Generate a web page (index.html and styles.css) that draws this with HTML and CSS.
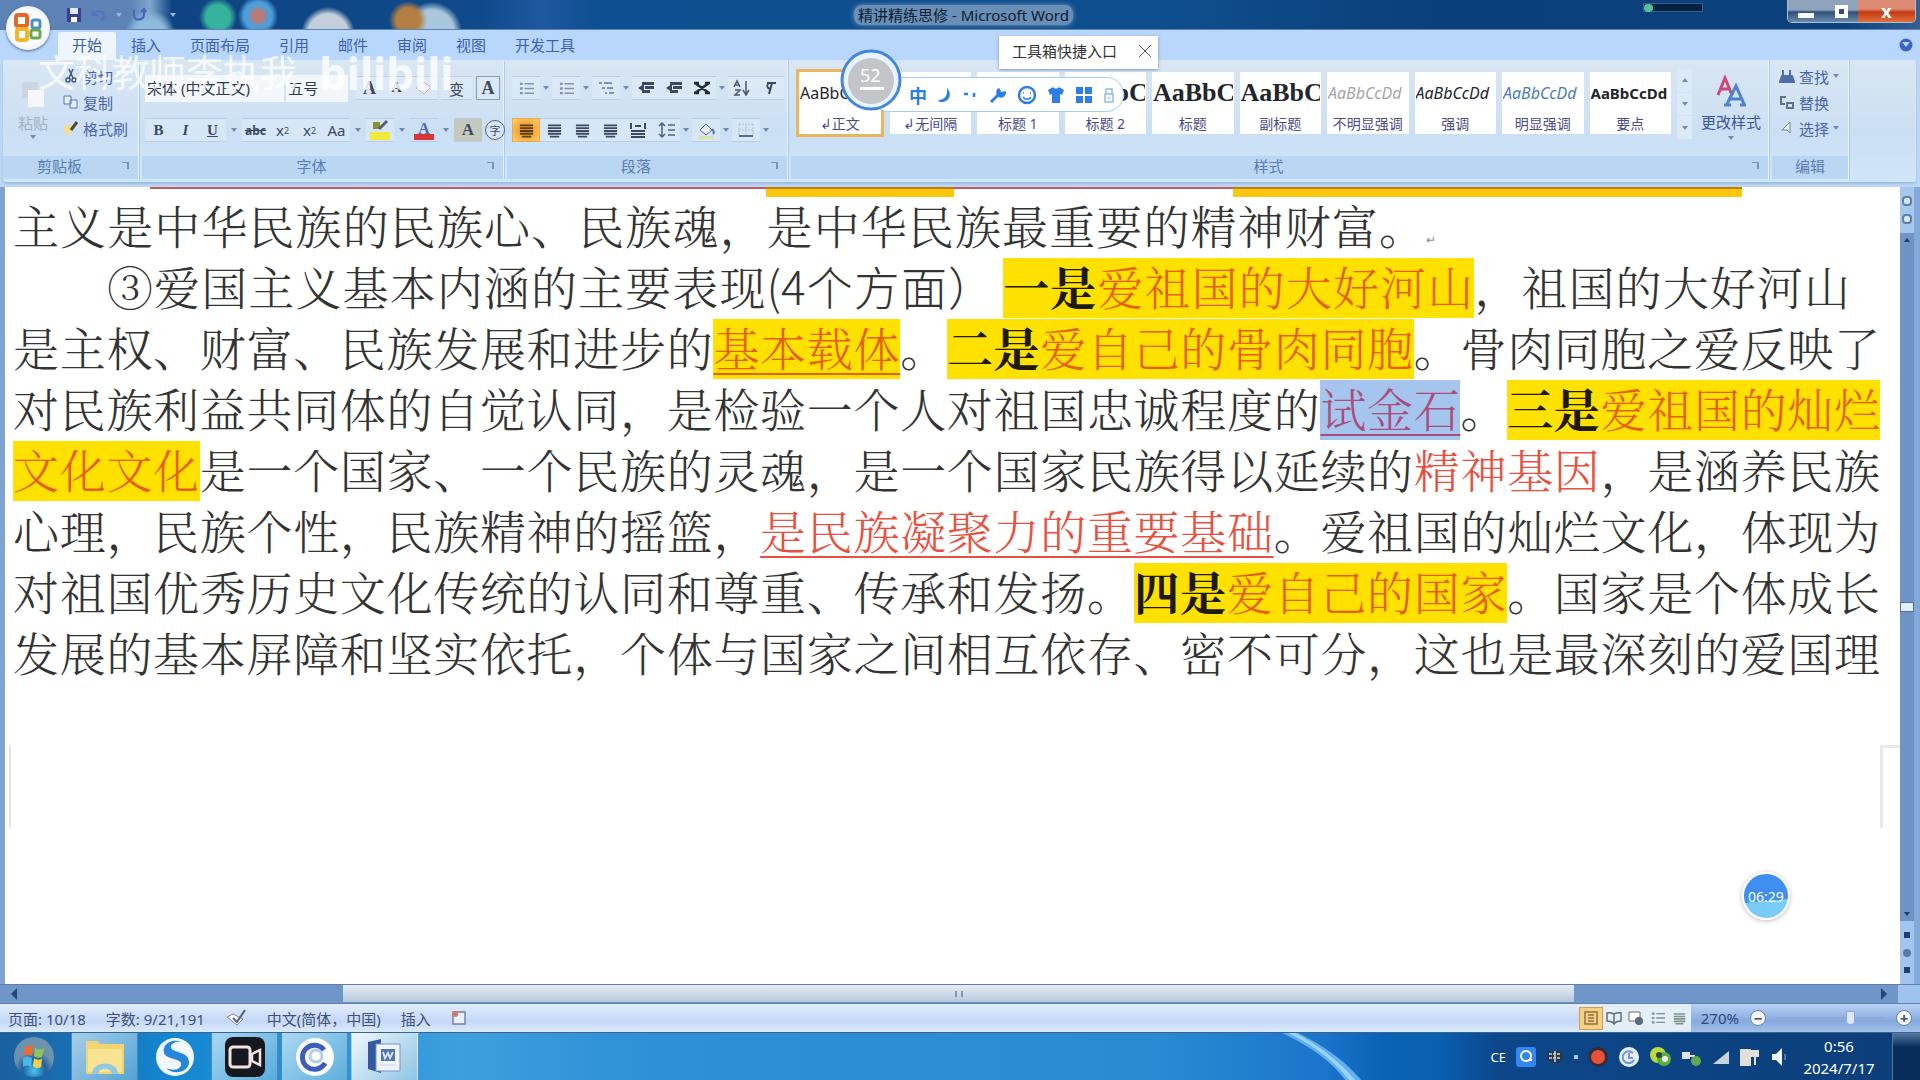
FILE: index.html
```html
<!DOCTYPE html>
<html lang="zh-CN">
<head>
<meta charset="utf-8">
<title>精讲精练思修 - Microsoft Word</title>
<link rel="stylesheet" href="styles.css">
</head>
<body>
<svg width="0" height="0" class="defs" aria-hidden="true">
  <symbol id="lines" viewBox="0 0 16 16"><path d="M1 2.5h14M1 5.5h14M1 8.500h14M1 11.500h14M3 14.500h10" stroke="currentColor" stroke-width="2"/></symbol>
  <symbol id="list" viewBox="0 0 16 16"><path d="M6 3h10M6 8h10M6 13h10" stroke="currentColor" stroke-width="1.500"/><path d="M1 3h3M1 8h3M1 13h3" stroke="currentColor" stroke-width="2.500"/></symbol>
  <symbol id="indent" viewBox="0 0 16 16"><path d="M4 2h12v3H4zM7 6h9v3H7zM4 10h8v3H4z" fill="currentColor"/><path d="M6 4v8L0 8z" fill="currentColor"/></symbol>
</svg>

<header class="titlebar">
  <div class="quick">
    <button aria-label="保存"><svg width="16" height="16" viewBox="0 0 16 16"><path d="M1 1h14v14H1z" fill="#3c3f93"/><path d="M4 1h8v6H4z" fill="#dfe6f5"/><path d="M5 10h6v5H5z" fill="#fff"/></svg></button>
    <button aria-label="撤消"><svg width="16" height="16" viewBox="0 0 16 16"><path d="M2 3v5h5M3 7c3-5 10-3 10 2 0 2-1 3-3 4" fill="none" stroke="#5273bd" stroke-width="2"/></svg></button>
    <span class="caret light"></span>
    <button aria-label="恢复"><svg width="16" height="16" viewBox="0 0 16 16"><path d="M3 3v5c0 6 9 6 10 0V3m-3 2 3-3 2 3" fill="none" stroke="#3f66bd" stroke-width="2"/></svg></button>
    <span class="caret light end-caret"></span>
  </div>
  <div class="doc-title"><span>精讲精练思修 - Microsoft Word</span></div>
  <div class="rec"><i></i></div>
  <div class="winbtns">
    <button class="min" aria-label="最小化"><i></i></button>
    <button class="max" aria-label="还原"><i></i></button>
    <button class="close" aria-label="关闭">x</button>
  </div>
</header>
<button class="orb" aria-label="Office 按钮"><svg width="30" height="32" viewBox="0 0 30 32"><rect x="3" y="3" width="11" height="11" rx="2" fill="none" stroke="#e4672b" stroke-width="4"/><rect x="4" y="17" width="10" height="11" rx="2" fill="none" stroke="#efb52b" stroke-width="4"/><rect x="19" y="8" width="8" height="8" rx="2" fill="none" stroke="#4b8fd0" stroke-width="3"/><rect x="18" y="18" width="9" height="8" rx="2" fill="none" stroke="#69a850" stroke-width="3"/></svg></button>

<nav class="tabs">
  <button class="tab on">开始</button><button class="tab">插入</button><button class="tab">页面布局</button><button class="tab">引用</button><button class="tab">邮件</button><button class="tab">审阅</button><button class="tab">视图</button><button class="tab">开发工具</button>
  <button class="help" aria-label="帮助"><svg width="14" height="14" viewBox="0 0 14 14"><circle cx="7" cy="7" r="6.500" fill="#3766c4"/><path d="M3 4h8l-4 5z" fill="#bcd3fa"/></svg></button>
</nav>

<section class="ribbon">
  <div class="group clip">
    <div class="body">
      <button class="paste"><svg width="26" height="32" viewBox="0 0 26 32"><path d="M2 4h16v16H2z" fill="#ccd6e2"/><path d="M8 12h16v17H8z" fill="#f4f8fd"/></svg><span>粘贴</span><i class="caret"></i></button>
      <div class="stack">
        <button><svg width="16" height="16" viewBox="0 0 16 16"><path d="M6 1l4 9M10 1 6 10" stroke="#495578" stroke-width="1.500"/><circle cx="5" cy="12" r="2" fill="none" stroke="#495578" stroke-width="1.500"/><circle cx="11" cy="12" r="2" fill="none" stroke="#495578" stroke-width="1.500"/></svg>剪切</button>
        <button><svg width="16" height="16" viewBox="0 0 16 16"><path d="M1 2h7v8H1zM7 6h7v8H7z" fill="#e9effb" stroke="#5c74b9"/></svg>复制</button>
        <button><svg width="16" height="16" viewBox="0 0 16 16"><path d="M1 5h8v8l-5 2-3-3z" fill="#f0dc92"/><path d="M8 10 14 2" stroke="#4f4738" stroke-width="3"/></svg>格式刷</button>
      </div>
    </div>
    <div class="label">剪贴板<i class="launch"></i></div>
  </div>

  <div class="group font">
    <div class="body rows">
      <div class="row">
        <select class="face" aria-label="字体"><option>宋体 (中文正文)</option></select>
        <select class="size" aria-label="字号"><option>五号</option></select>
        <button class="big">A</button><button class="sm">A</button>
        <button aria-label="清除格式"><svg width="20" height="18" viewBox="0 0 20 18"><path d="M2 9 9 3l8 5-7 7z" fill="#f5eef5" stroke="#b9b3c9"/></svg></button>
        <button class="tb">变</button><button class="tb boxed">A</button>
      </div>
      <div class="row">
        <button><b>B</b></button><button><em>I</em></button><button><u>U</u></button><i class="caret"></i>
        <button><s>abc</s></button><button>x<sub>2</sub></button><button>x<sup>2</sup></button><button>Aa</button><i class="caret"></i>
        <button class="wide" aria-label="突出显示"><svg width="20" height="22" viewBox="0 0 20 22"><path d="M0 13h20v8H0z" fill="#f0e83c"/><path d="M3 3h7v7H3z" fill="#8a9139"/><path d="m9 10 8-8" stroke="#56606e" stroke-width="3"/></svg></button><i class="caret"></i>
        <button class="wide colorA">A</button><i class="caret"></i>
        <button class="wide shade">A</button><button class="ring">字</button>
      </div>
    </div>
    <div class="label">字体<i class="launch"></i></div>
  </div>

  <div class="group para">
    <div class="body rows">
      <div class="row">
        <button aria-label="项目符号" class="dim"><svg width="15" height="15"><use href="#list"/></svg></button><i class="caret"></i>
        <button aria-label="编号" class="dim"><svg width="15" height="15"><use href="#list"/></svg></button><i class="caret"></i>
        <button aria-label="多级列表" class="dim"><svg width="16" height="16" viewBox="0 0 16 16"><path d="M1 3h3M6 3h8M4 8h3M9 8h6M7 13h2M11 13h5" stroke="currentColor" stroke-width="2"/></svg></button><i class="caret"></i>
        <button aria-label="减少缩进"><svg width="16" height="16"><use href="#indent"/></svg></button>
        <button aria-label="增加缩进"><svg width="16" height="16"><use href="#indent"/></svg></button>
        <button aria-label="中文版式"><svg width="18" height="16" viewBox="0 0 18 16"><path d="m2 3 14 10M16 3 2 13M1 3h5M12 3h5M1 13h5M12 13h5" stroke="#222b3a" stroke-width="2.500"/></svg></button><i class="caret"></i>
        <button aria-label="排序"><svg width="18" height="18" viewBox="0 0 18 18"><path d="m1 8 3-6 3 6M2 6h4M2 11h5l-5 5h5M13 2v13m-3-4 3 5 3-5" fill="none" stroke="#4c5a72" stroke-width="1.500"/></svg></button>
        <button aria-label="显示标记"><svg width="16" height="16" viewBox="0 0 16 16"><path d="M5 3h9M10 3 7 14M7 3c-3 2-2 5 1 6" fill="none" stroke="#3a4660" stroke-width="2"/></svg></button>
      </div>
      <div class="row">
        <button class="active" aria-label="左对齐"><svg width="15" height="15"><use href="#lines"/></svg></button>
        <button aria-label="居中"><svg width="15" height="15"><use href="#lines"/></svg></button>
        <button aria-label="右对齐"><svg width="15" height="15"><use href="#lines"/></svg></button>
        <button aria-label="两端对齐"><svg width="15" height="15"><use href="#lines"/></svg></button>
        <button aria-label="分散对齐"><svg width="16" height="16" viewBox="0 0 16 16"><path d="M1 1v6M15 1v6M5 4h6M1 9h14M1 12h14M1 15h14" stroke="currentColor" stroke-width="2"/></svg></button>
        <button aria-label="行距"><svg width="17" height="16" viewBox="0 0 17 16"><path d="M4 1v14M1 4l3-3 3 3M1 12l3 3 3-3M10 3h7M10 8h7M10 13h7" fill="none" stroke="#52637e" stroke-width="1.500"/></svg></button><i class="caret"></i>
        <button aria-label="底纹"><svg width="18" height="18" viewBox="0 0 18 18"><path d="m3 9 6-6 6 6-6 5z" fill="#e8eef5" stroke="#5b6b84"/><path d="M1 15h15v3H1z" fill="#d9e5a4"/><path d="M15 8c2 2 2 4 1 5" stroke="#4a72bc" stroke-width="2" fill="none"/></svg></button><i class="caret"></i>
        <button aria-label="边框"><svg width="16" height="16" viewBox="0 0 16 16"><path d="M1 2h14M1 8h14M1 2v12M8 2v12M15 2v12" stroke="#b2bfd2" stroke-dasharray="2 1"/><path d="M1 14h14" stroke="#5d6d86" stroke-width="2"/></svg></button><i class="caret"></i>
      </div>
    </div>
    <div class="label">段落<i class="launch"></i></div>
  </div>

  <div class="group styles">
    <div class="body gallery">
      <button class="tile sel"><span class="n">AaBbCc</span><small>↲正文</small></button>
      <button class="tile"><span class="n">AaBbCc</span><small>↲无间隔</small></button>
      <button class="tile"><span class="h">AaBbC</span><small>标题 1</small></button>
      <button class="tile"><span class="h">AaBbC</span><small>标题 2</small></button>
      <button class="tile"><span class="h">AaBbC</span><small>标题</small></button>
      <button class="tile"><span class="h">AaBbC</span><small>副标题</small></button>
      <button class="tile"><span class="i grey">AaBbCcDd</span><small>不明显强调</small></button>
      <button class="tile"><span class="i">AaBbCcDd</span><small>强调</small></button>
      <button class="tile"><span class="i blue">AaBbCcDd</span><small>明显强调</small></button>
      <button class="tile"><span class="k">AaBbCcDd</span><small>要点</small></button>
      <div class="spin"><button aria-label="上"><i class="caret up"></i></button><button aria-label="下"><i class="caret"></i></button><button aria-label="更多"><i class="caret"></i></button></div>
      <button class="change"><svg width="32" height="32" viewBox="0 0 32 32"><path d="m3 20 7-17 7 17M6 14h8" fill="none" stroke="#cb4979" stroke-width="3"/><path d="m12 29 9-18 8 18M15 24h11M9 30h7M25 30h6" fill="none" stroke="#4d82cd" stroke-width="3"/></svg><span>更改样式</span><i class="caret"></i></button>
    </div>
    <div class="label">样式<i class="launch"></i></div>
  </div>

  <div class="group edit">
    <div class="body">
      <div class="stack">
        <button><svg width="16" height="16" viewBox="0 0 16 16"><path d="M4 2v5M11 2v5M3 8h4v6H1zM9 8h4l2 6H9z" fill="#506ca7" stroke="#506ca7" stroke-width="2"/></svg>查找<i class="caret"></i></button>
        <button><svg width="16" height="16" viewBox="0 0 16 16"><path d="M7 3H2v7h4M8 9h6v5H8z" fill="none" stroke="#5f7488" stroke-width="2"/></svg>替换</button>
        <button><svg width="16" height="16" viewBox="0 0 16 16"><path d="M11 2v11l-3-3H3z" fill="#f3f8ff" stroke="#6b80a7"/></svg>选择<i class="caret"></i></button>
      </div>
    </div>
    <div class="label">编辑</div>
  </div>
</section>

<div class="watermark"><span>文科教师李执我</span><b>bilibili</b></div>

<div class="tip"><span>工具箱快捷入口</span><button aria-label="关闭提示"><svg width="14" height="14" viewBox="0 0 14 14"><path d="m1 1 12 12M13 1 1 13" stroke="#555"/></svg></button></div>
<div class="ime">
  <div class="face-icon"><svg width="62" height="62" viewBox="0 0 62 62"><circle cx="31" cy="31" r="29" fill="#e9f3fd" stroke="#4287dc" stroke-width="3"/><circle cx="31" cy="32" r="23" fill="#c3c5c8"/><path d="M20 38h24v3H20z" fill="#fff"/></svg><span>52</span></div>
  <b>中</b>
  <svg width="16" height="18" viewBox="0 0 16 18"><path d="M10 2c6 6 2 15-7 14-2-1-2-2-1-2 6 0 9-5 8-12z" fill="#2c7de6"/></svg>
  <svg width="16" height="18" viewBox="0 0 16 18"><path d="M1 8h4M11 7v4" stroke="#2c7de6" stroke-width="2.500"/></svg>
  <svg width="18" height="18" viewBox="0 0 18 18"><path d="M2 16 9 9" stroke="#2c7de6" stroke-width="3"/><path d="M8 3c4-3 3 3 5 3s4-2 4 1c-1 5-6 6-9 3-1-2-1-5 0-7z" fill="#2c7de6"/></svg>
  <svg width="20" height="20" viewBox="0 0 20 20"><circle cx="10" cy="10" r="8" fill="none" stroke="#2c7de6" stroke-width="2.500"/><path d="M6 8h1M13 8h1M6 12c2 3 6 3 8 0" stroke="#2c7de6" stroke-width="1.500" fill="none"/></svg>
  <svg width="18" height="18" viewBox="0 0 18 18"><path d="m1 4 5-3c1 2 5 2 6 0l5 3-2 5-2-1v9H5V8L3 9z" fill="#2c7de6"/></svg>
  <svg width="18" height="18" viewBox="0 0 18 18"><path d="M1 1h7v7H1zM10 1h7v7h-7zM1 10h7v7H1zM10 10h7v7h-7z" fill="#2c7de6"/></svg>
  <svg width="12" height="18" viewBox="0 0 12 18"><path d="M3 8V3h6v5M2 8h8v8H2zM6 11v2" fill="none" stroke="#8dbaf0" stroke-width="1.500"/></svg>
</div>

<div class="work">
  <main class="page">
    <div class="prev"><i class="hl a"></i><i class="hl c"></i></div>
    <article>
      <p class="first">主义是中华民族的民族心、民族魂，是中华民族最重要的精神财富。<small>↵</small></p>
      <p class="second">③爱国主义基本内涵的主要表现<span class="sans">(4个方面）</span><mark><b>一是</b>爱祖国的大好河山</mark>，祖国的大好河山</p>
      <p>是主权、财富、民族发展和进步的<mark class="ul">基本载体</mark>。<mark><b>二是</b>爱自己的骨肉同胞</mark>。骨肉同胞之爱反映了</p>
      <p>对民族利益共同体的自觉认同，是检验一个人对祖国忠诚程度的<mark class="selected">试金石</mark>。<mark><b>三是</b>爱祖国的灿烂</mark></p>
      <p><mark>文化文化</mark>是一个国家、一个民族的灵魂，是一个国家民族得以延续的<span class="red">精神基因</span>，是涵养民族</p>
      <p>心理，民族个性，民族精神的摇篮，<span class="red ul">是民族凝聚力的重要基础</span>。爱祖国的灿烂文化，体现为</p>
      <p>对祖国优秀历史文化传统的认同和尊重、传承和发扬。<mark><b>四是</b>爱自己的国家</mark>。国家是个体成长</p>
      <p>发展的基本屏障和坚实依托，个体与国家之间相互依存、密不可分，这也是最深刻的爱国理</p>
    </article>
    <div class="corners"><i></i><i></i></div>
    <div class="timer">06:29</div>
  </main>
  <aside class="vscroll">
    <div class="vtop"><i></i><i></i></div>
    <div class="track"><i class="caret up"></i><span class="thumb"></span><i class="caret"></i></div>
    <div class="jump"><i></i><i class="o"></i><i></i></div>
  </aside>
</div>
<div class="hscroll"><i class="arr l"></i><div class="rail"><div class="hthumb"><i></i></div></div><i class="arr r"></i><span class="end"></span></div>

<footer class="status">
  <span>页面: 10/18</span><span>字数: 9/21,191</span>
  <svg width="22" height="18" viewBox="0 0 22 18"><path d="m2 8 6-3 10 5-6 6z" fill="#fff" stroke="#7886a6"/><path d="m8 9 4 4 8-12" fill="none" stroke="#52617f" stroke-width="2"/></svg>
  <span>中文(简体，中国)</span><span>插入</span>
  <svg width="16" height="16" viewBox="0 0 16 16"><path d="M2 2h12v12H2z" fill="#e9effa" stroke="#7780a0" stroke-width="1.500"/><circle cx="4" cy="4" r="3" fill="#d07a68"/></svg>
  <div class="views">
    <button class="on" aria-label="页面视图"><svg width="16" height="16" viewBox="0 0 16 16"><path d="M2 2h12v12H2zM5 5h6M5 8h6M5 11h6" fill="none" stroke="#95703b" stroke-width="1.500"/></svg></button>
    <button aria-label="阅读版式"><svg width="16" height="16" viewBox="0 0 16 16"><path d="M1 3c3-1 5 0 7 1 2-1 4-2 7-1v8c-3 0-5 0-7 3-2-3-4-3-7-3zM8 4v9" fill="none" stroke="#626c7d" stroke-width="1.500"/></svg></button>
    <button aria-label="Web 版式"><svg width="16" height="16" viewBox="0 0 16 16"><path d="M1 2h11v9H1z" fill="#fff" stroke="#626c7d"/><circle cx="11" cy="11" r="4" fill="#586b79"/></svg></button>
    <button aria-label="大纲"><svg width="14" height="14"><use href="#list"/></svg></button>
    <button aria-label="普通"><svg width="13" height="13"><use href="#lines"/></svg></button>
  </div>
  <div class="scale">
    <span class="pct">270%</span>
    <button class="zoom">−</button><div class="slide"><i></i></div><button class="zoom">+</button>
  </div>
</footer>

<footer class="taskbar">
  <button class="start" aria-label="开始菜单"><svg width="44" height="44" viewBox="0 0 44 44"><defs><radialGradient id="orbg" cy=".85"><stop offset="0" stop-color="#4bc5ef"/><stop offset=".6" stop-color="#1f5f9e"/><stop offset="1" stop-color="#6d92ac"/></radialGradient></defs><circle cx="22" cy="22" r="20" fill="url(#orbg)"/><path d="M13 12c3-2 6-2 8 0l-1 9c-3-2-6-2-9 0z" fill="#e96b35"/><path d="M23 13c3 2 6 2 9 0l-2 9c-3 1-6 1-8-1z" fill="#8fc655"/><path d="M11 23c3-2 6-2 9 0l-1 9c-3-2-5-2-8 0z" fill="#4bb6ec"/><path d="M22 23c2 2 5 2 8 1l-1 8c-3 2-6 1-8-1z" fill="#f5d148"/></svg></button>
  <button class="app lit" aria-label="资源管理器"><svg width="42" height="40" viewBox="0 0 42 40"><path d="M2 4h12l2 3h24v30H2z" fill="#f0d472"/><path d="M4 12h34v23H4z" fill="#f8e392"/><path d="M8 37c0-14 26-14 26 0h-6c-1-7-13-7-14 0z" fill="#8fc8df"/></svg></button>
  <button class="app" aria-label="搜狗"><svg width="40" height="40" viewBox="0 0 40 40"><circle cx="20" cy="20" r="19" fill="#f2f7fd"/><path d="M27 5C15 1 7 8 9 16c2 7 19 5 17 12-1 5-8 6-15 3 8 8 23 4 23-6 0-11-18-9-18-15 0-4 5-6 11-5z" fill="#2487db"/></svg></button>
  <button class="app lit" aria-label="录屏"><svg width="40" height="40" viewBox="0 0 40 40"><rect width="40" height="40" rx="8" fill="#15191f"/><rect x="5" y="10" width="20" height="20" rx="3" fill="none" stroke="#f1e3e1" stroke-width="3"/><path d="m27 17 8-4v15l-8-4z" fill="none" stroke="#f1e3e1" stroke-width="2.500"/></svg></button>
  <button class="app lit" aria-label="课堂"><svg width="40" height="40" viewBox="0 0 40 40"><circle cx="20" cy="20" r="19" fill="#fafcff"/><path d="M29 13a12 12 0 1 0 1 13" fill="none" stroke="#3c5dbd" stroke-width="5"/><circle cx="21" cy="19" r="6" fill="none" stroke="#b5ccf1" stroke-width="3"/></svg></button>
  <button class="app word" aria-label="Word"><svg width="40" height="38" viewBox="0 0 40 38"><path d="M3 4 16 1v34L3 31z" fill="#35599f"/><path d="M11 6h24v27H11z" fill="#eef3fa" stroke="#7b94c3"/><path d="M16 11h14v12H16z" fill="#5274ae"/><path d="m18 14 2 6 3-5 2 5 3-6M15 27h16" fill="none" stroke="#d9e3f3" stroke-width="2"/></svg></button>
  <div class="glare"><svg width="100" height="47" viewBox="0 0 100 47"><path d="M0-2h16c26 12 52 30 68 50H68C54 28 30 12 0-2z" fill="#5fb0f2"/><path d="M6-2h8c26 14 48 30 64 50h-6C56 28 36 12 6-2z" fill="#9dd2fb"/></svg></div>
  <div class="tray">
    <span class="ce">CE</span>
    <svg width="20" height="20" viewBox="0 0 20 20"><rect width="20" height="20" rx="3" fill="#3487ef"/><circle cx="10" cy="9" r="5" fill="none" stroke="#fff" stroke-width="2"/><path d="M12 13h4" stroke="#fff" stroke-width="2"/></svg>
    <svg width="18" height="16" viewBox="0 0 18 16"><rect x="1" y="2" width="16" height="12" rx="5" fill="#283850"/><path d="M3 5h12M3 9h12M9 2v11" stroke="#d5d8da" stroke-width="1.500" stroke-dasharray="3 1"/></svg>
    <i class="dot"></i>
    <svg width="20" height="20" viewBox="0 0 20 20"><circle cx="10" cy="10" r="10" fill="#342c3c"/><circle cx="10" cy="10" r="7" fill="#e85338"/></svg>
    <svg width="22" height="22" viewBox="0 0 22 22"><circle cx="11" cy="11" r="10" fill="#e8f0ff"/><path d="M15 7a6 6 0 1 0 1 7M11 7v5h4" fill="none" stroke="#7292df" stroke-width="2"/></svg>
    <svg width="22" height="20" viewBox="0 0 22 20"><circle cx="8" cy="8" r="8" fill="#bfd83d"/><circle cx="14" cy="12" r="7" fill="#5dab47"/><circle cx="9" cy="8" r="3" fill="#244a39"/><circle cx="15" cy="12" r="3" fill="#f0f7e8"/></svg>
    <svg width="20" height="20" viewBox="0 0 20 20"><path d="M0 6h7v5H0zM8 9h5" fill="#dfe3e7" stroke="#dfe3e7" stroke-width="2"/><circle cx="14" cy="14" r="5" fill="#64a751"/></svg>
    <svg width="18" height="18" viewBox="0 0 18 18"><path d="M1 16 17 3v13z" fill="#c8d5df"/></svg>
    <svg width="20" height="20" viewBox="0 0 20 20"><path d="M1 3h9v15H1zM12 4h6v5h-6zM15 8v10" fill="#e2ded8" stroke="#e2ded8" stroke-width="2"/></svg>
    <svg width="18" height="20" viewBox="0 0 18 20"><path d="M2 7h4l6-6v18l-6-6H2z" fill="#eef3f8"/><path d="M15 7v6" stroke="#8eb3d4"/></svg>
  </div>
  <div class="clock"><span>0:56</span><span>2024/7/17</span></div>
  <button class="desk" aria-label="显示桌面"></button>
</footer>
</body>
</html>
```
FILE: styles.css
```css
* { box-sizing: border-box; }
html, body { height: 100%; }
body {
  margin: 0; display: flex; flex-direction: column; position: relative; overflow: hidden;
  font-family: "Noto Sans", "Noto Sans CJK SC", sans-serif; font-size: 15px; color: #3b5596; background: #bcd6f5;
}
button { border: 0; padding: 0; margin: 0; background: none; font: inherit; color: inherit; display: flex; align-items: center; justify-content: center; white-space: nowrap; }
.defs { position: absolute; }
i { font-style: normal; display: block; }
svg { flex: none; display: block; }
.caret { border: 3px solid transparent; border-top: 4px solid #7389ae; border-bottom: 0; width: 6px; flex: none; }
.caret.up { border-top: 0; border-bottom: 4px solid #7389ae; }
.caret.light { border-top-color: #9bb3d8; }
.end-caret { margin-left: 14px; }

/* title bar */
.titlebar {
  height: 30px; flex: none; display: flex; align-items: center; position: relative;
  background:
    radial-gradient(circle at 218px 17px, #35b39d 0 12px, transparent 19px),
    radial-gradient(circle at 258px 16px, #bb7a77 0 5px, #4d9fdc 11px 14px, transparent 20px),
    radial-gradient(circle at 328px 34px, #c3cfdb 0 20px, transparent 27px),
    radial-gradient(circle at 408px 20px, #b37e41 0 12px, transparent 19px),
    radial-gradient(circle at 432px 32px, #a9c6dc 0 22px, transparent 30px),
    radial-gradient(circle at 150px 36px, #8fbadb 0 16px, transparent 26px),
    linear-gradient(90deg, #5d82b5 0 130px, #7fa6cc 150px, #0e4482 172px, #104a8a 480px, #1f58a0 540px, #0d4f90 600px, #0f4f8e 60%, #0b3f79 75%, #0c417c 96%, #355f92);
  border-bottom: 1px solid #5f83b0;
}
.quick { display: flex; align-items: center; gap: 9px; padding-left: 66px; width: 190px; }
.doc-title { flex: 1; display: flex; justify-content: center; padding-left: 94px; color: #0c1c33; white-space: nowrap; }
.doc-title span { line-height: 20px; padding: 0 4px; background: rgba(155,178,205,.65); border-radius: 8px; box-shadow: 0 0 5px rgba(155,178,205,.7); }
.rec { width: 60px; height: 9px; align-self: flex-start; margin: 3px 84px 0 0; border: 1px solid #31618f; background: #06203f; }
.rec i { width: 9px; height: 8px; border-radius: 4px; background: #58c0a0; }
.winbtns { display: flex; align-self: flex-start; height: 23px; margin-right: 4px; border: 1px solid #a9bdd3; border-top: 0; border-radius: 0 0 5px 5px; overflow: hidden; color: #fff; }
.winbtns button { width: 36px; background: linear-gradient(#8fa3ba 45%, #2d4f78 55%, #6c8aac); }
.winbtns .max { width: 34px; }
.winbtns .close { width: 57px; background: linear-gradient(#dd8a73 40%, #c43a15 55%, #e0703c); font-weight: 700; font-size: 18px; line-height: 18px; }
.min i { width: 16px; height: 5px; background: #fff; margin-top: 8px; }
.max i { width: 13px; height: 13px; border: 4px solid #fff; background: #2d4f78; }
.orb { position: absolute; left: 6px; top: 6px; width: 44px; height: 44px; border-radius: 50%; background: radial-gradient(#fff 50%, #d3dce9); box-shadow: 0 1px 3px #46618a; z-index: 2; }

/* tabs */
.tabs { height: 30px; flex: none; display: flex; align-items: flex-end; gap: 1px; padding: 0 7px 0 58px; background: #b9d6fc; }
.tab { height: 28px; padding: 0 14px 4px; color: #3d5fae; }
.tab.on { background: #eff5fc; border-radius: 3px 3px 0 0; }
.help { margin-left: auto; align-self: center; }

/* ribbon */
.ribbon { height: 122px; flex: none; display: flex; gap: 3px; margin: 0 4px 5px 3px; padding: 1px 0 3px; background: linear-gradient(#d9e6f2, #cbdff4 60%, #cfe6fa); border-radius: 3px; box-shadow: 0 2px 2px #9dbde0; }
.group { display: flex; flex-direction: column; border-right: 1px solid #e9f3fc; box-shadow: 1px 0 #aecbe6; }
.body { flex: 1; display: flex; min-height: 0; }
.label { height: 23px; flex: none; display: flex; align-items: center; justify-content: center; position: relative; padding: 0 22px 4px 0; background: #b9d7f2; color: #5c7bb0; }
.edit .label { padding-right: 0; }
.launch { position: absolute; right: 9px; top: 6px; width: 7px; height: 7px; border-top: 1px solid #7695bd; border-right: 2px solid #7695bd; }
.clip { width: 136px; }
.font { width: 362px; }
.para { width: 281px; }
.styles { flex: 1; min-width: 0; }
.edit { width: 77px; margin-right: 67px; }
.paste { width: 60px; flex-direction: column; color: #a2b0c4; gap: 2px; }
.stack { display: flex; flex-direction: column; padding-top: 2px; }
.stack button { height: 26px; gap: 4px; justify-content: flex-start; color: #4764ab; }
.edit .stack { padding-left: 7px; }
.rows { flex-direction: column; gap: 16px; padding: 14px 3px 0; }
.row { display: flex; height: 26px; align-items: center; color: #3c4961; }
.row button { width: 27px; height: 24px; flex: none; border-block: 1px solid #b9cee6; background: rgba(226,237,249,.5); }
.row > .caret { margin: 0 5px; }
.row .wide { width: 28px; }
.row .dim { color: #8193ae; }
.row .active { background: radial-gradient(#e58b1a, #ffcf6b); border: 1px solid #eba94a; color: #5c3c10; }
.font b, .font em, .font u, .big, .sm, .boxed, .colorA, .shade { font-family: "Liberation Serif", serif; font-weight: 700; }
.font s { font-size: 12px; font-weight: 700; }
.font sub, .font sup { font-size: 9px; }
.font .big { font-size: 18px; margin-left: 6px; }
.font .sm { font-size: 14px; }
.font .tb { margin-left: 4px; width: 31px; }
.font .boxed { border: 1px solid #8b9cb5; width: 24px; font-size: 18px; }
.font .colorA { color: #4969a9; font-size: 16px; line-height: 14px; padding-bottom: 2px; background: linear-gradient(#db3434, #db3434) center bottom 1px / 20px 6px no-repeat; }
.font .shade { background: #c5c9bd; font-size: 17px; margin-right: 3px; }
.font .ring { font-size: 11px; border: 1px solid #56657d; border-radius: 50%; width: 20px; height: 20px; }
select { appearance: none; border: 0; border-radius: 0; height: 27px; padding: 0 0 0 2px; margin-right: 2px; background: #f3f7fb; font: inherit; color: #2f3b50; }
.face { width: 140px; }
.size { width: 62px; }
.para .rows { padding-left: 5px; }
.para .row button { width: 28px; }
.para .row .caret { margin: 0 3px; }

.gallery { padding: 8px 4px 0 5px; align-items: flex-start; gap: 6px; }
.tile { flex: 1 1 0; min-width: 0; height: 62px; margin-top: 3px; flex-direction: column; justify-content: space-between; padding: 5px 1px 0; overflow: hidden; background: #fff; }
.tile.sel { height: 68px; margin-top: 0; padding: 5px 1px 0; border: 3px solid #e9b55f; }
.tile span { width: 100%; height: 32px; line-height: 32px; overflow: hidden; text-align: left; color: #23262c; }
.tile small { font-size: 14px; line-height: 20px; color: #4a4a8c; }
.tile .n { font-size: 16px; }
.tile .h { font: 700 26px/32px "Liberation Serif", serif; }
.tile .i { font-style: italic; font-size: 16px; }
.tile .k { font-weight: 700; font-size: 15px; }
.tile .grey { color: #a5a5a5; }
.tile .blue { color: #4c7cbd; }
.spin { width: 15px; height: 70px; display: flex; flex-direction: column; gap: 1px; }
.spin button { flex: 1; background: #dce9f7; }
.change { width: 66px; height: 76px; flex-direction: column; gap: 4px; }

/* overlays */
.watermark { position: absolute; left: 38px; top: 45px; z-index: 3; display: flex; align-items: center; gap: 22px; color: rgba(255,255,255,.8); font-size: 37px; line-height: 56px; }
.watermark b { font-size: 44px; }
.tip { position: absolute; left: 999px; top: 36px; width: 159px; height: 33px; z-index: 3; background: #fff; color: #333; display: flex; align-items: center; justify-content: space-between; padding: 0 6px 4px 13px; box-shadow: 0 1px 3px #7b93b4; }
.ime { position: absolute; left: 871px; top: 77px; width: 253px; height: 35px; z-index: 2; padding: 0 8px 0 37px; background: #fff; border: 1px solid #a5cbf5; border-radius: 18px; display: flex; align-items: center; justify-content: space-between; color: #2c7de6; font-size: 18px; }
.face-icon { position: absolute; left: -32px; top: -29px; color: #fff; }
.face-icon span { position: absolute; left: 20px; top: 14px; font-size: 18px; line-height: 24px; }

/* document */
.work { flex: 1; min-height: 0; display: flex; border-left: 5px solid #7fa3d0; }
.page { flex: 1; min-width: 0; background: #fff; position: relative; }
.prev { height: 7px; margin-left: 145px; margin-right: 158px; border-top: 2px solid #c65b62; position: relative; }
.prev .hl { position: absolute; top: -2px; height: 10px; background: #fbc70c; border-top: 2px solid #bd7d10; }
.prev .a { left: 616px; width: 188px; }
.prev .c { right: 0; width: 509px; }
article { padding: 0 20px 0 8px; color: #333; font-family: "Noto Serif CJK SC", "Noto Sans CJK SC", serif; font-size: 46px; font-weight: 300; }
p { margin: 0; height: 61px; line-height: 61px; white-space: nowrap; text-align-last: justify; }
.first { margin-right: 444px; }
.first small { font-size: 12px; line-height: 12px; color: #888; }
.second { padding: 0 30px 0 94px; }
.sans { font-family: "Noto Sans CJK SC", sans-serif; font-weight: 300; padding-right: 8px; }
/* the highlight fills the whole line height, a little below the glyph box */
mark { color: #e4600c; background: linear-gradient(#ffe100, #ffe100) 0 6px / 100% 61px no-repeat; }
mark b { color: #1d1a00; font-weight: 700; }
.ul { text-decoration: underline 2px; text-underline-offset: 7px; }
.red { color: #e8513f; }
.selected { background: linear-gradient(#a5c4ee, #a5c4ee) 0 6px / 100% 61px no-repeat; color: #a94d7c; text-decoration: underline 2px; text-underline-offset: 7px; }
.corners { display: flex; justify-content: space-between; margin-top: 63px; padding-left: 4px; }
.corners i { width: 2px; height: 83px; background: #e4e4e4; }
.corners i + i { width: 20px; background: none; border: solid #e8e8e8; border-width: 3px 0 0 3px; }
.timer { position: absolute; right: 110px; bottom: 64px; width: 48px; height: 48px; border-radius: 50%; border: 2px solid #fff; box-shadow: 0 1px 5px #bbb; color: #fff; background: linear-gradient(175deg, #3f8ff2 60%, #79cbf8 61%); display: flex; align-items: center; justify-content: center; font-size: 14px; }

.vscroll { width: 20px; flex: none; display: flex; flex-direction: column; border-right: 6px solid #83a9da; background: #a2c4ee; }
.vtop { height: 46px; display: flex; flex-direction: column; align-items: center; justify-content: space-evenly; background: #a7c6ec; }
.vtop i { width: 10px; height: 10px; border: 2px solid #5c7fae; border-radius: 4px; background: #d7e6f8; }
.track { flex: 1; display: flex; flex-direction: column; justify-content: space-between; align-items: center; padding: 5px 0; background: #6d94c4; }
.track .caret { border-top-color: #1f3c6b; border-bottom-color: #1f3c6b; }
.thumb { width: 14px; height: 10px; margin-top: 60px; background: #e6eff9; border: 1px solid #4d719f; }
.jump { height: 63px; display: flex; flex-direction: column; align-items: center; justify-content: space-evenly; }
.jump i { width: 6px; height: 6px; background: #1d3f73; }
.jump .o { border-radius: 50%; background: #5479ab; width: 8px; height: 8px; }
.hscroll { height: 20px; flex: none; display: flex; align-items: center; border-block: 1px solid #5f7fa9; background: #6f96c9; }
.arr { width: 17px; border: 6px solid transparent; flex: none; }
.arr.l { border-right-color: #244675; border-left: 0; }
.arr.r { border-left-color: #244675; border-right: 0; }
.rail { flex: 1; height: 100%; display: flex; padding: 0 16% 0 17%; }
.hthumb { flex: 1; height: 17px; display: flex; align-items: center; justify-content: center; background: linear-gradient(#e6edf5, #b5c7db); }
.hthumb i { width: 8px; height: 6px; border-inline: 2px solid #8196b3; }
.end { width: 22px; height: 100%; background: #9fc2ee; }

/* status bar */
.status { height: 28px; flex: none; display: flex; align-items: center; gap: 20px; padding: 0 8px; white-space: nowrap; color: #3e5074; background: linear-gradient(#e3edfb, #c3d7f6 60%, #dceafb); }
.views { margin-left: auto; display: flex; height: 23px; background: #e4eef7; }
.views button { width: 22px; color: #7c938c; }
.views .on { width: 24px; background: #f4cf87; border: 1px solid #d99d43; }
.scale { display: flex; align-items: center; align-self: stretch; gap: 11px; margin: 0 -8px 0 -20px; padding: 0 8px 0 10px; background: linear-gradient(#b9d2f6, #86a9de 60%, #a3c0ea); }
.pct { color: #2f4878; }
.zoom { width: 16px; height: 16px; border-radius: 50%; background: #f3f6fa; border: 1px solid #6883a8; font-weight: 700; line-height: 14px; }
.slide { width: 108px; height: 2px; background: #8eaad2; position: relative; }
.slide i { position: absolute; right: 30px; top: -6px; width: 9px; height: 14px; background: #dce9fa; border: 1px solid #91abd0; border-radius: 0 0 4px 4px; }

/* taskbar */
.taskbar { height: 48px; flex: none; display: flex; align-items: center; gap: 3px; border-top: 1px solid #36668f; color: #fff; background: linear-gradient(90deg, #1b609f, #1487d2 9%, #3d9fdd 24%, #2e90d6 34%, #2a8bd3 60%, #1c74cb 69%, #0b63b5 72%, #0a5fb0 75%, #0d478a 78%, #0c3e78); }
.start { width: 68px; }
.app { width: 67px; height: 47px; border-inline: 1px solid transparent; }
.lit { border-color: #4e88b4; background: linear-gradient(135deg, rgba(230,246,255,.7), rgba(140,200,225,.5)); }
.word { background: linear-gradient(135deg, #f0f7fc, #8fc4e4); }
.glare { flex: 1; height: 100%; display: flex; justify-content: flex-end; padding-right: 110px; overflow: hidden; }
.tray { display: flex; align-items: center; gap: 10px; }
.ce { font-size: 13px; }
.dot { width: 4px; height: 4px; background: #a6c8e6; }
.clock { width: 96px; margin-right: 2px; display: flex; flex-direction: column; align-items: center; line-height: 22px; }
.desk { width: 28px; height: 100%; background: linear-gradient(#577ca3, #092d5b 30%); border-left: 1px solid #55789d; }
```
